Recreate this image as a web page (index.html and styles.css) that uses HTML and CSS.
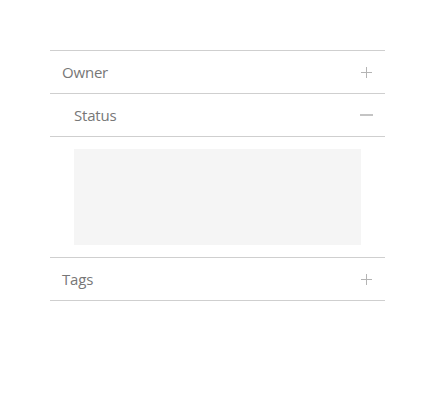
FILE: index.html
```html
<!DOCTYPE html>
<html>
<head>
<meta charset="utf-8">
<link rel="stylesheet" href="styles.css">
</head>
<body>
<div class="accordion">
  <div class="item">
    <div class="header">
      <span class="title">Owner</span>
      <span class="icon plus"></span>
    </div>
  </div>
  <div class="item open">
    <div class="header">
      <span class="title">Status</span>
      <span class="icon minus"></span>
    </div>
    <div class="body">
      <div class="panel"></div>
    </div>
  </div>
  <div class="item">
    <div class="header">
      <span class="title">Tags</span>
      <span class="icon plus"></span>
    </div>
  </div>
</div>
</body>
</html>
```
FILE: styles.css
```css
html, body {
  margin: 0;
  padding: 0;
  background: #fff;
}
body {
  padding: 50px 50px 0 50px;
  font-family: "Open Sans", "Noto Sans", sans-serif;
}
.accordion {
  width: 335px;
  border-top: 1px solid #cfcfcf;
}
.item {
  border-bottom: 1px solid #cfcfcf;
}
.header {
  height: 42px;
  display: flex;
  align-items: center;
  justify-content: space-between;
  padding: 0 12px;
}
.title {
  font-size: 15px;
  font-weight: 400;
  color: #777;
  letter-spacing: -0.2px;
}
.open .title {
  padding-left: 12px;
}
.icon {
  position: relative;
  width: 11px;
  height: 11px;
  margin-right: 1px;
}
.icon::before,
.icon::after {
  content: "";
  position: absolute;
  background: #b4b4b4;
}
.plus::before {
  left: 0;
  right: 0;
  top: 5px;
  height: 1px;
}
.plus::after {
  top: 0;
  bottom: 0;
  left: 5px;
  width: 1px;
}
.minus::before {
  left: -1px;
  right: -1px;
  top: 4px;
  height: 2px;
  background: #c4c4c4;
}
.minus::after {
  display: none;
}
.body {
  border-top: 1px solid #cfcfcf;
  padding: 12px 24px 12px 24px;
}
.panel {
  height: 96px;
  background: #f5f5f5;
}
```
